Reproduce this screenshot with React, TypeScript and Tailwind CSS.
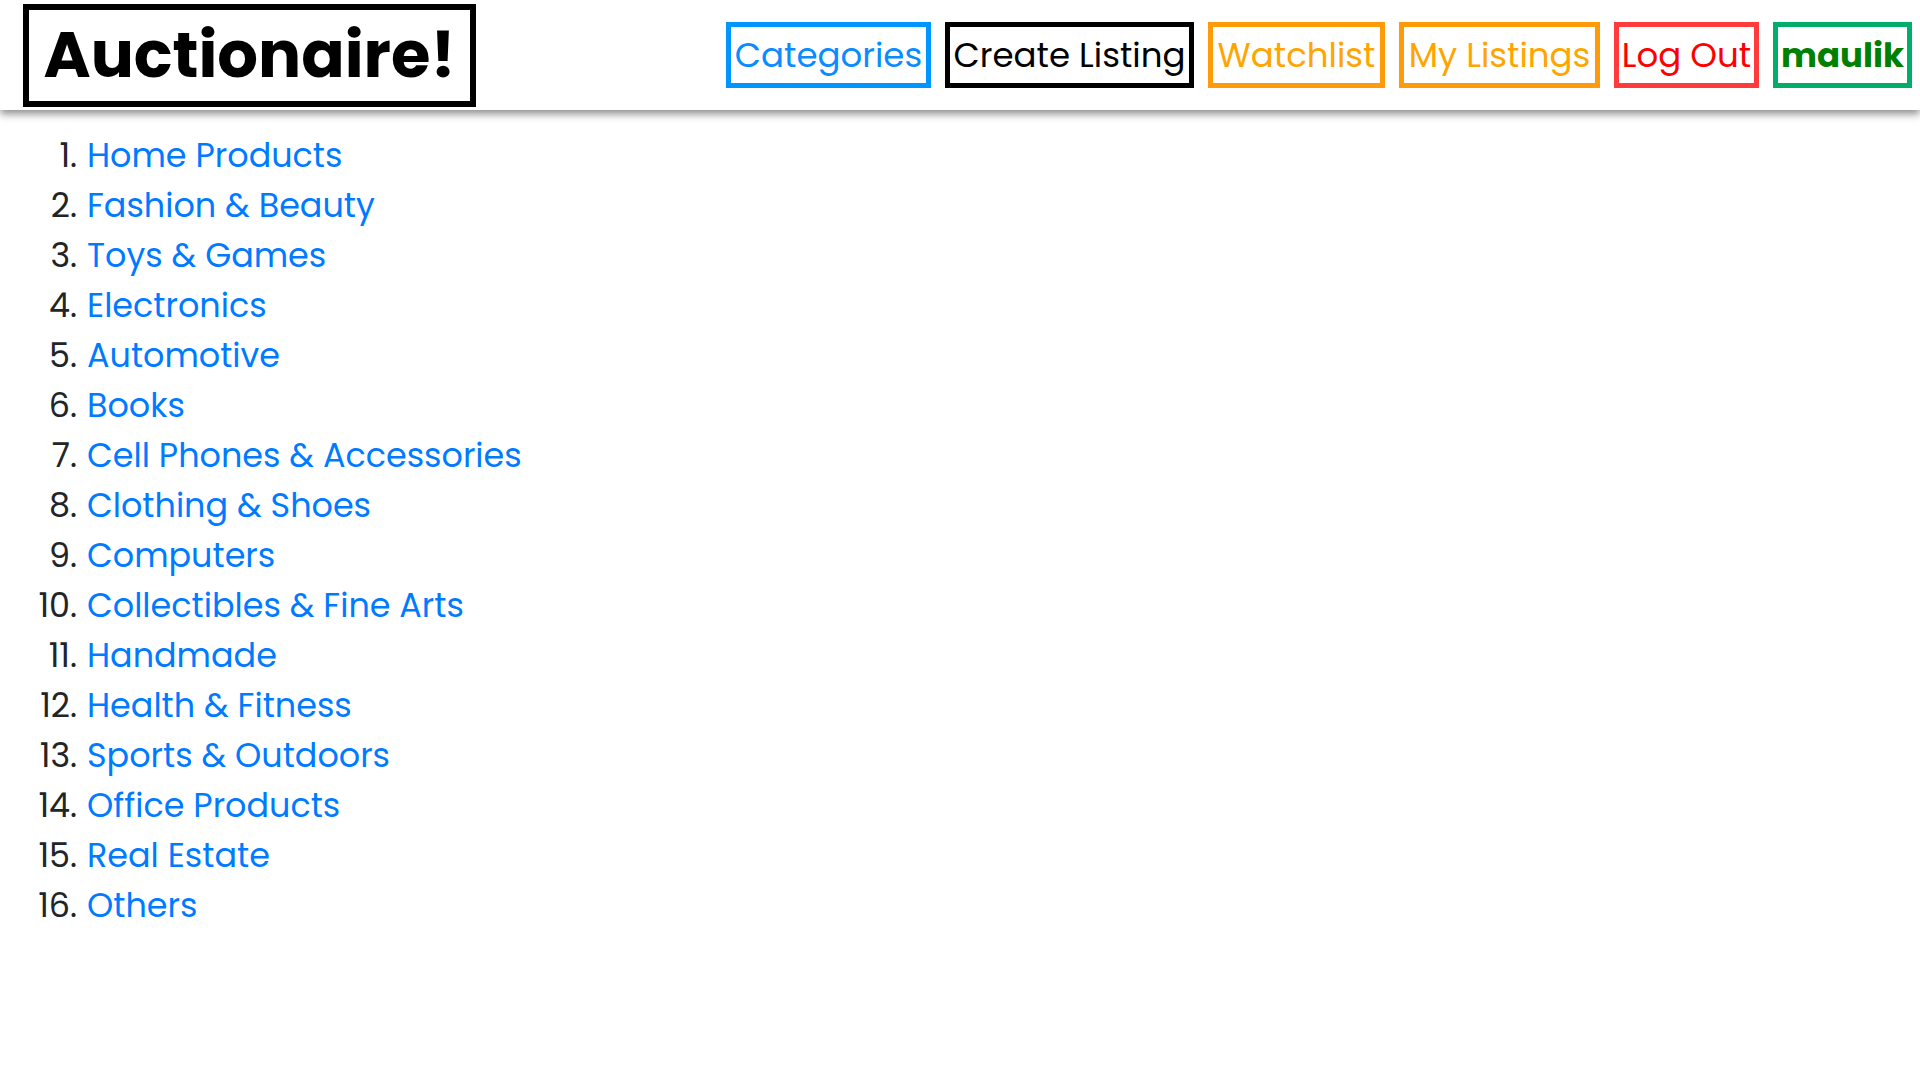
import React from "react";

const categories = [
  "Home Products",
  "Fashion & Beauty",
  "Toys & Games",
  "Electronics",
  "Automotive",
  "Books",
  "Cell Phones & Accessories",
  "Clothing & Shoes",
  "Computers",
  "Collectibles & Fine Arts",
  "Handmade",
  "Health & Fitness",
  "Sports & Outdoors",
  "Office Products",
  "Real Estate",
  "Others",
];

export default function App() {
  return (
    <div
      className="min-h-screen bg-white text-[#212529]"
      style={{ fontFamily: "Poppins, Inter, 'Noto Sans', sans-serif" }}
    >
      <header className="h-[110px] flex items-center justify-between pl-[23px] pr-[8px] bg-white shadow-[0_4px_8px_rgba(0,0,0,0.45)] relative z-10">
        <div className="w-[453px] h-[103px] border-[6px] border-black flex items-center justify-center">
          <span className="text-[64px] font-bold text-black leading-none">
            Auctionaire!
          </span>
        </div>
        <nav className="flex items-center gap-[14px]">
          <a className="w-[205px] h-[66px] border-[5px] border-[#0096ff] text-[#0a8cff] text-[34px] flex items-center justify-center">
            Categories
          </a>
          <a className="w-[249px] h-[66px] border-[5px] border-black text-black text-[34px] flex items-center justify-center">
            Create Listing
          </a>
          <a className="w-[177px] h-[66px] border-[5px] border-[#ff9a0a] text-[#ffa500] text-[34px] flex items-center justify-center">
            Watchlist
          </a>
          <a className="w-[201px] h-[66px] border-[5px] border-[#ff9a0a] text-[#ffa500] text-[34px] flex items-center justify-center">
            My Listings
          </a>
          <a className="w-[145px] h-[66px] border-[5px] border-[#ff3b3b] text-[#ff0000] text-[34px] flex items-center justify-center">
            Log Out
          </a>
          <a className="w-[139px] h-[66px] border-[5px] border-[#00ad6b] text-[#008000] text-[34px] font-bold flex items-center justify-center">
            maulik
          </a>
        </nav>
      </header>
      <ol className="list-decimal pl-[86px] mt-[21px] text-[33.4px] leading-[50px]">
        {categories.map((c) => (
          <li key={c} className="pl-[1px]">
            <a className="text-[#007bff]">{c}</a>
          </li>
        ))}
      </ol>
    </div>
  );
}
